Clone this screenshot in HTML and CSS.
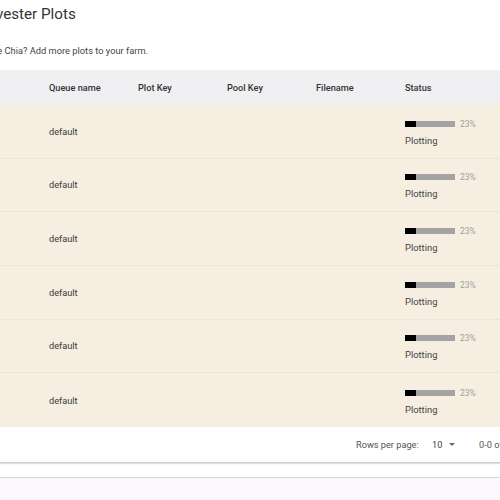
FILE: index.html
```html
<!DOCTYPE html>
<html>
<head>
<meta charset="utf-8">
<link rel="stylesheet" href="styles.css">
</head>
<body>
<div class="page">
  <div class="intro">
    <h1 class="title">Local Harvester Plots</h1>
    <p class="subtitle">Want to earn more Chia? Add more plots to your farm.</p>
  </div>
  <div class="paper">
    <div class="row head">
      <div class="cell"></div>
      <div class="cell">Queue name</div>
      <div class="cell">Plot Key</div>
      <div class="cell">Pool Key</div>
      <div class="cell">Filename</div>
      <div class="cell">Status</div>
    </div>
    <div class="row plot"><div class="cell"></div><div class="cell">default</div><div class="cell"></div><div class="cell"></div><div class="cell"></div><div class="cell status"><div class="prog"><span class="bar"><span class="fill"></span></span><span class="pct">23%</span></div><div class="state">Plotting</div></div></div>
    <div class="row plot"><div class="cell"></div><div class="cell">default</div><div class="cell"></div><div class="cell"></div><div class="cell"></div><div class="cell status"><div class="prog"><span class="bar"><span class="fill"></span></span><span class="pct">23%</span></div><div class="state">Plotting</div></div></div>
    <div class="row plot"><div class="cell"></div><div class="cell">default</div><div class="cell"></div><div class="cell"></div><div class="cell"></div><div class="cell status"><div class="prog"><span class="bar"><span class="fill"></span></span><span class="pct">23%</span></div><div class="state">Plotting</div></div></div>
    <div class="row plot"><div class="cell"></div><div class="cell">default</div><div class="cell"></div><div class="cell"></div><div class="cell"></div><div class="cell status"><div class="prog"><span class="bar"><span class="fill"></span></span><span class="pct">23%</span></div><div class="state">Plotting</div></div></div>
    <div class="row plot"><div class="cell"></div><div class="cell">default</div><div class="cell"></div><div class="cell"></div><div class="cell"></div><div class="cell status"><div class="prog"><span class="bar"><span class="fill"></span></span><span class="pct">23%</span></div><div class="state">Plotting</div></div></div>
    <div class="row plot last"><div class="cell"></div><div class="cell">default</div><div class="cell"></div><div class="cell"></div><div class="cell"></div><div class="cell status"><div class="prog"><span class="bar"><span class="fill"></span></span><span class="pct">23%</span></div><div class="state">Plotting</div></div></div>
    <div class="footer">
      <span class="rpp">Rows per page:</span>
      <span class="sel">10</span>
      <svg class="caret" width="10" height="10" viewBox="0 0 10 10"><path d="M2 4 L5 7 L8 4 Z" fill="#666"/></svg>
      <span class="range">0-0 of 0</span>
    </div>
  </div>
  <div class="next"></div>
</div>
</body>
</html>
```
FILE: styles.css
```css
html, body {
  margin: 0;
  padding: 0;
  background: #fff;
  overflow: hidden;
}
body {
  font-family: Roboto, "Liberation Sans", sans-serif;
  color: #333;
  width: 500px;
  height: 500px;
}
.page {
  margin-left: -93px;
  width: 700px;
}
.intro {
  margin-left: 19px;
}
.title {
  margin: 0;
  padding-top: 3px;
  padding-left: 5px;
  height: 25px;
  font-size: 15.2px;
  font-weight: 400;
  line-height: 22px;
  color: #333;
  white-space: nowrap;
}
.subtitle {
  margin: 0;
  padding-top: 16px;
  height: 26px;
  font-size: 9.3px;
  line-height: 14px;
  color: #444;
  white-space: nowrap;
}
.paper {
  width: 700px;
  background: #fff;
  border-bottom: 1px solid #cfcfcf;
  box-shadow: 0 1px 1px rgba(0,0,0,0.12);
}
.row {
  display: grid;
  grid-template-columns: 53px 89px 89px 89px 89px 120px;
  padding-left: 89px;
}
.head {
  height: 35px;
  background: #f0eff1;
  font-size: 9.2px;
  font-weight: 500;
  color: #333;
  align-items: center;
}
.plot {
  height: 53.67px;
  box-sizing: border-box;
  background: #f6eee0;
  border-bottom: 1px solid #ede4d3;
  align-items: center;
  font-size: 9.2px;
  color: #3a3a3a;
}
.plot.last {
  border-bottom: none;
}
.status {
  display: flex;
  flex-direction: column;
  gap: 6px;
  padding-top: 2px;
}
.prog {
  display: flex;
  align-items: center;
  gap: 5px;
}
.bar {
  width: 50px;
  height: 6px;
  background: #a3a3a3;
  display: flex;
}
.fill {
  width: 11px;
  background: #000;
}
.pct {
  font-size: 8.5px;
  color: #a0a0a0;
}
.state {
  font-size: 9.4px;
  color: #444;
}
.footer {
  height: 35px;
  display: flex;
  align-items: center;
  padding-left: 449px;
  font-size: 9.2px;
  color: #555;
}
.rpp {
  width: 76px;
}
.sel {
  width: 15px;
  color: #444;
}
.caret {
  margin-right: 22px;
}
.range {
  color: #555;
}
.next {
  margin-top: 14px;
  height: 30px;
  border-top: 1px solid #d6d6d6;
  background: #fcf8fc;
}
```
